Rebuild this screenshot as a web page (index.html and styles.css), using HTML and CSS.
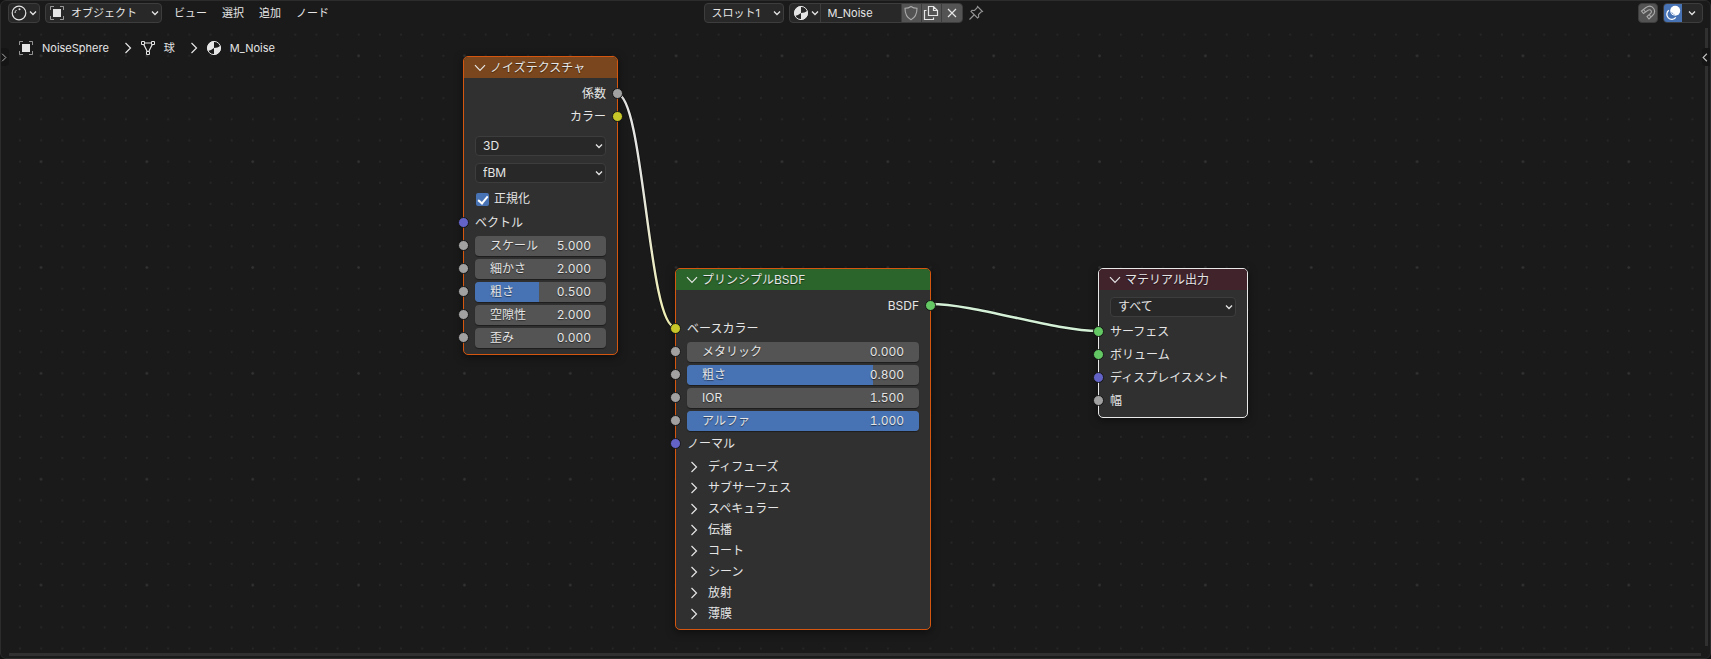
FILE: index.html
```html
<!DOCTYPE html>
<html lang="ja">
<head>
<meta charset="utf-8">
<title>Shader Editor</title>
<link rel="stylesheet" href="styles.css">
</head>
<body>
<svg class="defs" width="0" height="0" aria-hidden="true">
  <symbol id="down" viewBox="0 0 8 6"><path d="M1 1.5 4 4.5 7 1.5" fill="none" stroke="currentColor" stroke-width="1.3"/></symbol>
  <symbol id="fold" viewBox="0 0 12 8"><path d="M1 1.2 6 6.4 11 1.2" fill="none" stroke="currentColor" stroke-width="1.2"/></symbol>
  <symbol id="next" viewBox="0 0 8 12"><path d="M1.5 1 6.5 6 1.5 11" fill="none" stroke="currentColor" stroke-width="1.2"/></symbol>
  <symbol id="object" viewBox="0 0 16 16"><path d="M4 4h8v8H4z" fill="currentColor"/><path d="M1.5 5V1.5H5M11 1.5h3.500V5M14.500 11v3.500H11M5 14.500H1.500V11" fill="none" stroke="currentColor" stroke-opacity=".6"/></symbol>
  <symbol id="material" viewBox="0 0 16 16"><circle cx="8" cy="8" r="6.600" fill="none" stroke="currentColor"/><path d="M8 8V1.200A6.800 6.800 0 0 0 1.200 8c0 1 .3 2 .8 3C4 10.500 6 9.500 8 8z" fill="currentColor"/><path d="M8 8v6.800A6.800 6.800 0 0 0 14.800 8c0-.8-.2-1.600-.4-2.200C12.500 7.500 10.500 8 8 8z" fill="currentColor"/></symbol>
</svg>
<div class="editor">
  <header class="header">
    <div class="group">
      <button class="box editor-type" aria-label="シェーダーエディター">
        <svg width="16" height="16" viewBox="0 0 16 16"><circle cx="8" cy="8" r="6.800" fill="none" stroke="currentColor" stroke-width="1.200"/><path d="M4 8A4 4 0 0 1 5.500 5" fill="none" stroke="currentColor"/><circle cx="8.500" cy="4.200" r="1" fill="currentColor"/></svg>
        <svg width="8" height="6"><use href="#down"/></svg>
      </button>
      <div class="pick mode">
        <svg class="lead" width="16" height="16"><use href="#object"/></svg>
        <select aria-label="シェーダータイプ"><option>オブジェクト</option></select>
        <svg class="caret" width="8" height="6"><use href="#down"/></svg>
      </div>
      <nav class="menus">
        <button>ビュー</button><button>選択</button><button>追加</button><button>ノード</button>
      </nav>
    </div>
    <div class="group center">
      <div class="pick slot">
        <select aria-label="スロット"><option>スロット1</option></select>
        <svg class="caret" width="8" height="6"><use href="#down"/></svg>
      </div>
      <div class="box datablock">
        <button class="browse" aria-label="マテリアルを選択"><svg width="16" height="16"><use href="#material"/></svg><svg width="8" height="6"><use href="#down"/></svg></button>
        <input class="name" type="text" value="M_Noise" aria-label="マテリアル名">
        <button class="tool" aria-label="フェイクユーザー"><svg class="dim" width="16" height="16" viewBox="0 0 16 16"><path d="M8 1.500C6 3 4 3.300 2 3.300 2 9 3.500 12.500 8 14.700 12.500 12.500 14 9 14 3.300 12 3.300 10 3 8 1.500z" fill="none" stroke="currentColor" stroke-width="1.100"/></svg></button>
        <button class="tool" aria-label="複製"><svg width="16" height="16" viewBox="0 0 16 16"><path d="M5.500 1.500h5l4 4v5h-9zM10.500 1.500v4h4M3.500 5.500h-2v9h9v-2" fill="none" stroke="currentColor" stroke-width="1.200"/></svg></button>
        <button class="tool" aria-label="リンク解除"><svg width="16" height="16" viewBox="0 0 16 16"><path d="m4 4 8 8M12 4l-8 8" fill="none" stroke="currentColor" stroke-width="1.200"/></svg></button>
      </div>
      <button class="pin" aria-label="ピン留め"><svg class="dim" width="16" height="16" viewBox="0 0 16 16"><path d="m9.500 1.500 5 5-1.500.5-2.500 2.500.2 2.500-1.200 1-6.500-6.500 1-1.200 2.500.2L9 3zM6 10l-4.500 4.500" fill="none" stroke="currentColor" stroke-width="1.100"/></svg></button>
    </div>
    <div class="group right">
      <button class="box tool snap" aria-label="スナップ"><svg class="dim" width="16" height="16" viewBox="0 0 16 16"><path d="M1.500 6 6 2.500C9 .5 12 1 13.700 3.500c1.500 2.500 1 5-1.200 7L9 14l-2-2.500 3.500-3c1-1 1.200-2 .5-3s-2-1-3-.3L3.500 8.500zM3.500 4.500l2 2.500M9 9.500l2 2.500" fill="none" stroke="currentColor" stroke-width="1.100"/></svg></button>
      <div class="box overlays">
        <button class="toggle" aria-label="オーバーレイ"><svg width="16" height="16" viewBox="0 0 16 16"><circle cx="10.200" cy="5.800" r="5" fill="currentColor"/><path d="M3.800 5.300a5 5 0 1 0 7 7" fill="none" stroke="currentColor" stroke-width="1.300"/><path d="M6.800 7.500a3.500 3.500 0 0 0 2.500 2" fill="none" stroke="#4772b3" stroke-width="1" stroke-dasharray="1.500 1"/></svg></button>
        <button class="more" aria-label="オーバーレイ設定"><svg width="8" height="6"><use href="#down"/></svg></button>
      </div>
    </div>
  </header>

  <main class="canvas">
    <svg class="backdrop" aria-hidden="true">
      <defs>
        <pattern id="minor" x="8.500" y="-1.900" width="21.170" height="21.170" patternUnits="userSpaceOnUse"><circle cx="10.500" cy="10.500" r="1" fill="#272727"/></pattern>
        <pattern id="major" x="29.500" y="-80.500" width="105.850" height="105.850" patternUnits="userSpaceOnUse"><circle cx="10.500" cy="4.500" r="1.200" fill="#343434"/></pattern>
        <linearGradient id="fac" x1="0" y1="0" x2="0" y2="1"><stop offset="0" stop-color="#e6e6e6"/><stop offset=".35" stop-color="#e4e4e0"/><stop offset="1" stop-color="#f0f0b4"/></linearGradient>
      </defs>
      <rect width="100%" height="100%" fill="url(#minor)"/>
      <rect width="100%" height="100%" fill="url(#major)"/>
      <g fill="none" stroke-linecap="round">
        <path d="M616 68C643 68 647 301 674 301" stroke="#111" stroke-width="4"/>
        <path d="M616 68C643 68 647 301 674 301" stroke="url(#fac)" stroke-width="2.400"/>
        <path d="M929 278C976 278 1051 305 1098 305" stroke="#111" stroke-width="4"/>
        <path d="M929 278C976 278 1051 305 1098 305" stroke="#d4f0d6" stroke-width="2.400"/>
      </g>
    </svg>

    <nav class="crumbs">
      <svg width="16" height="16"><use href="#object"/></svg><span>NoiseSphere</span>
      <svg class="sep" width="8" height="12"><use href="#next"/></svg>
      <svg width="16" height="16" viewBox="0 0 16 16"><path d="M3 3h10L8 13z" fill="none" stroke="currentColor" stroke-width="1.200"/><path d="M1.500 1.500h3v3h-3zM11.500 1.500h3v3h-3zM6.500 11.500h3v3h-3z" fill="#1a1a1a" stroke="currentColor"/></svg><span>球</span>
      <svg class="sep" width="8" height="12"><use href="#next"/></svg>
      <svg width="16" height="16"><use href="#material"/></svg><span>M_Noise</span>
    </nav>

    <section class="node noise">
      <h2><svg width="12" height="8"><use href="#fold"/></svg>ノイズテクスチャ</h2>
      <div class="body">
        <div class="row out">係数<i class="socket gray"></i></div>
        <div class="row out">カラー<i class="socket yellow"></i></div>
        <div class="picks">
          <div class="pick"><select aria-label="次元"><option>3D</option></select><svg class="caret" width="8" height="6"><use href="#down"/></svg></div>
          <div class="pick"><select aria-label="タイプ"><option>fBM</option></select><svg class="caret" width="8" height="6"><use href="#down"/></svg></div>
        </div>
        <label class="check"><input type="checkbox" checked>正規化</label>
        <div class="row">ベクトル<i class="socket violet"></i></div>
        <div class="row"><i class="socket gray"></i><label class="field"><span>スケール</span><input type="text" value="5.000"></label></div>
        <div class="row"><i class="socket gray"></i><label class="field"><span>細かさ</span><input type="text" value="2.000"></label></div>
        <div class="row"><i class="socket gray"></i><label class="field"><b class="fill" style="width:49%"></b><span>粗さ</span><input type="text" value="0.500"></label></div>
        <div class="row"><i class="socket gray"></i><label class="field"><span>空隙性</span><input type="text" value="2.000"></label></div>
        <div class="row"><i class="socket gray"></i><label class="field"><span>歪み</span><input type="text" value="0.000"></label></div>
      </div>
    </section>

    <section class="node bsdf">
      <h2><svg width="12" height="8"><use href="#fold"/></svg>プリンシプルBSDF</h2>
      <div class="body">
        <div class="row out">BSDF<i class="socket green"></i></div>
        <div class="row">ベースカラー<i class="socket yellow"></i></div>
        <div class="row"><i class="socket gray"></i><label class="field"><span>メタリック</span><input type="text" value="0.000"></label></div>
        <div class="row"><i class="socket gray"></i><label class="field"><b class="fill" style="width:80%"></b><span>粗さ</span><input type="text" value="0.800"></label></div>
        <div class="row"><i class="socket gray"></i><label class="field"><span>IOR</span><input type="text" value="1.500"></label></div>
        <div class="row"><i class="socket gray"></i><label class="field"><b class="fill" style="width:100%"></b><span>アルファ</span><input type="text" value="1.000"></label></div>
        <div class="row">ノーマル<i class="socket violet"></i></div>
        <div class="panels">
          <button><svg width="8" height="12"><use href="#next"/></svg>ディフューズ</button>
          <button><svg width="8" height="12"><use href="#next"/></svg>サブサーフェス</button>
          <button><svg width="8" height="12"><use href="#next"/></svg>スペキュラー</button>
          <button><svg width="8" height="12"><use href="#next"/></svg>伝播</button>
          <button><svg width="8" height="12"><use href="#next"/></svg>コート</button>
          <button><svg width="8" height="12"><use href="#next"/></svg>シーン</button>
          <button><svg width="8" height="12"><use href="#next"/></svg>放射</button>
          <button><svg width="8" height="12"><use href="#next"/></svg>薄膜</button>
        </div>
      </div>
    </section>

    <section class="node output">
      <h2><svg width="12" height="8"><use href="#fold"/></svg>マテリアル出力</h2>
      <div class="body">
        <div class="pick"><select aria-label="ターゲット"><option>すべて</option></select><svg class="caret" width="8" height="6"><use href="#down"/></svg></div>
        <div class="row">サーフェス<i class="socket green"></i></div>
        <div class="row">ボリューム<i class="socket green"></i></div>
        <div class="row">ディスプレイスメント<i class="socket violet"></i></div>
        <div class="row">幅<i class="socket gray"></i></div>
      </div>
    </section>

    <div class="bar vertical"></div>
    <div class="bar horizontal"></div>
    <button class="tab tab-left" aria-label="ツールバー"><svg width="6" height="9" viewBox="0 0 8 12"><use href="#next"/></svg></button>
    <button class="tab tab-right" aria-label="サイドバー"><svg width="6" height="9" viewBox="0 0 8 12"><path d="M6.500 1 1.500 6l5 5" fill="none" stroke="currentColor" stroke-width="1.500"/></svg></button>
  </main>
</div>
</body>
</html>
```
FILE: styles.css
```css
* { box-sizing: border-box; }

body {
  margin: 0;
  background: #121212;
  color: #e5e5e5;
  font-family: Inter, "Noto Sans CJK JP", sans-serif;
  font-size: 12px;
  line-height: 16px;
}

button, input, select {
  margin: 0;
  padding: 0;
  border: 0;
  border-radius: 0;
  background: none;
  color: inherit;
  font: inherit;
  appearance: none;
  outline: none;
}

svg { display: block; flex: none; }
.defs { position: absolute; }
.dim { opacity: .6; }

.editor {
  display: flex;
  flex-direction: column;
  min-height: 100vh;
  border: 1px solid #2c2c2c;
  border-radius: 6px;
  background: #1a1a1a;
  overflow: hidden;
}

/* Header */
.header {
  display: grid;
  grid-template-columns: 1fr auto 1fr;
  align-items: center;
  height: 25px;
  padding: 0 7px 2px;
  font-size: 11px;
}
.group { display: flex; align-items: center; gap: 5px; }
.center { padding-right: 24px; }
.right { justify-content: flex-end; }

.box {
  display: flex;
  align-items: center;
  height: 20px;
  border: 1px solid #3d3d3d;
  border-radius: 4px;
  background: #282828;
  overflow: hidden;
}
.editor-type { justify-content: center; gap: 2px; width: 32px; }

.pick { position: relative; display: flex; align-items: center; }
.pick select {
  width: 100%;
  height: 20px;
  padding: 0 20px 0 7px;
  border: 1px solid #3d3d3d;
  border-radius: 4px;
  background: #282828;
}
.pick .caret { position: absolute; right: 3px; pointer-events: none; }
.pick .lead { position: absolute; left: 4px; pointer-events: none; }
.mode { width: 117px; }
.mode select { padding-left: 25px; }
.slot { width: 80px; }

.menus { display: flex; gap: 15px; padding-left: 7px; }

.datablock > * { height: 100%; border-right: 1px solid #3d3d3d; }
.datablock > :last-child { border-right: 0; }
.browse { display: flex; align-items: center; gap: 2px; width: 31px; padding-left: 3px; }
.name { width: 81px; padding-left: 7px; }
.tool { display: flex; align-items: center; justify-content: center; width: 20px; background: #545454; }

.overlays > button { display: flex; align-items: center; justify-content: center; height: 100%; }
.toggle { width: 18px; background: #4772b3; color: #fff; }
.more { width: 20px; }

/* Canvas */
.canvas { position: relative; flex: 1; min-height: 620px; }
.backdrop { position: absolute; inset: 0; width: 100%; height: 100%; }

.crumbs {
  position: relative;
  display: flex;
  align-items: center;
  gap: 8px;
  padding: 14px 17px;
  font-size: 11px;
}
.crumbs .sep { margin-left: 7px; }

/* Nodes */
.node {
  position: absolute;
  border: 1px solid #d4560f;
  border-radius: 5px;
  background: #303030;
  box-shadow: 0 2px 8px rgba(0, 0, 0, .5);
}
.node h2 {
  display: flex;
  align-items: center;
  gap: 4px;
  height: 21px;
  margin: 0;
  padding-left: 10px;
  border-radius: 4px 4px 0 0;
  font-size: 12px;
  font-weight: 400;
  text-shadow: 0 1px 1px rgba(0, 0, 0, .5);
}
.node .body { display: flex; flex-direction: column; padding: 4px 11px 5px; }

.noise { left: 462px; top: 30px; width: 155px; }
.noise h2 { background: #79461d; }
.bsdf { left: 674px; top: 242px; width: 256px; }
.bsdf h2 { background: #2b652b; }
.output { left: 1097px; top: 242px; width: 150px; border-color: #e8e8e8; }
.output h2 { background: #41232c; }

.row {
  position: relative;
  display: flex;
  align-items: center;
  height: 23px;
}
.out { justify-content: flex-end; }

.socket {
  position: absolute;
  left: -17px;
  width: 11px;
  height: 11px;
  border: 1px solid #151515;
  border-radius: 50%;
}
.out .socket { left: auto; right: -17px; }
.gray { background: #a1a1a1; }
.yellow { background: #c7c729; }
.violet { background: #6363c7; }
.green { background: #63c763; }

.output .pick { margin: 3px 0; }
.picks { display: flex; flex-direction: column; gap: 7px; padding: 8px 0 4px; }

.check { display: flex; align-items: center; gap: 5px; height: 24px; padding-left: 1px; }
.check input {
  width: 13px;
  height: 13px;
  border-radius: 2px;
  background: #4772b3;
}
.check input::after {
  content: "";
  display: block;
  width: 4px;
  height: 8px;
  margin: 1px 0 0 4px;
  border: solid #fff;
  border-width: 0 2px 2px 0;
  transform: rotate(40deg);
}

.field {
  position: relative;
  display: flex;
  align-items: center;
  width: 100%;
  height: 20px;
  padding: 0 15px;
  border-radius: 4px;
  background: #545454;
  box-shadow: 0 1px 1px rgba(0, 0, 0, .4);
  overflow: hidden;
}
.field span, .field input { position: relative; text-shadow: 0 1px 1px rgba(0, 0, 0, .5); }
.field span { flex: none; }
.field input { flex: 1; min-width: 0; text-align: right; font-variant-numeric: tabular-nums; }
.fill { position: absolute; left: 0; top: 0; bottom: 0; background: #4772b3; }

.panels { display: flex; flex-direction: column; padding-top: 1px; }
.panels button {
  display: flex;
  align-items: center;
  gap: 10px;
  height: 21px;
  padding-left: 3px;
}

/* Scroll bars and side tabs */
.bar { position: absolute; background: #303030; }
.vertical { top: 2px; right: 2px; bottom: 12px; width: 3px; }
.horizontal { left: 8px; right: 9px; bottom: 2px; height: 3px; }
.tab {
  position: absolute;
  top: 22px;
  display: flex;
  align-items: center;
  width: 8px;
  height: 18px;
  background: #151515;
  color: #c0c0c0;
}
.tab-left { left: 0; border-radius: 0 4px 4px 0; }
.tab-right { right: 0; border-radius: 4px 0 0 4px; }
```
